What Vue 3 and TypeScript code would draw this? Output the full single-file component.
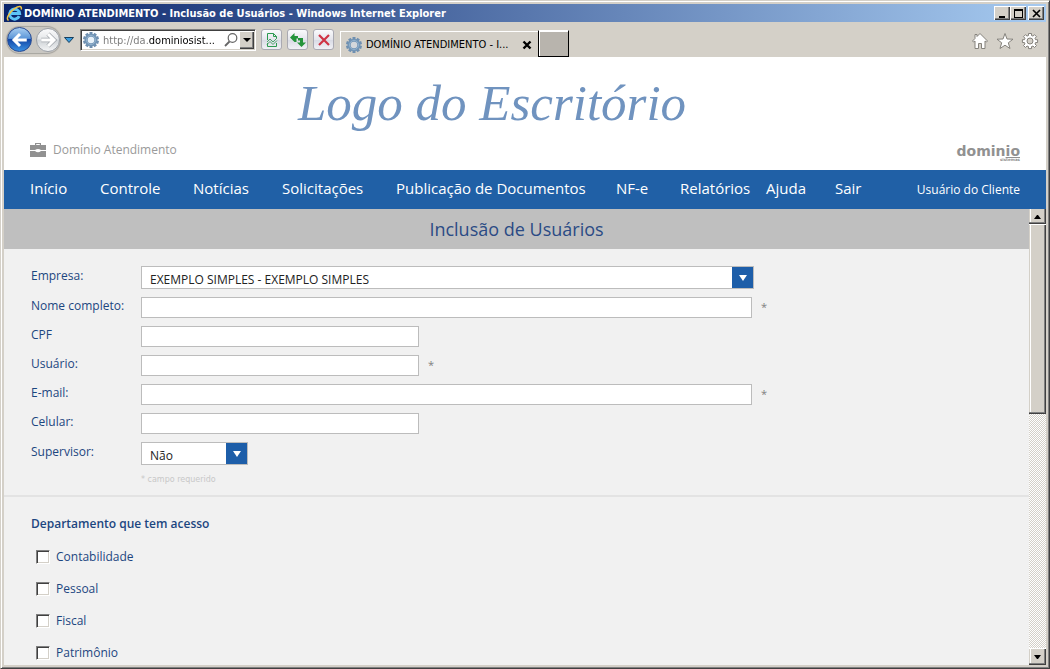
<script setup lang="ts">
import { ref } from 'vue'

interface Field {
  id: string
  label: string
  kind: 'select' | 'text'
  size: 'wide' | 'medium' | 'small'
  required?: boolean
  options?: string[]
}

const menu: string[] = [
  'Início',
  'Controle',
  'Notícias',
  'Solicitações',
  'Publicação de Documentos',
  'NF-e',
  'Relatórios',
  'Ajuda',
  'Sair',
]

const fields: Field[] = [
  { id: 'empresa', label: 'Empresa:', kind: 'select', size: 'wide', options: ['EXEMPLO SIMPLES - EXEMPLO SIMPLES'] },
  { id: 'nome', label: 'Nome completo:', kind: 'text', size: 'wide', required: true },
  { id: 'cpf', label: 'CPF', kind: 'text', size: 'medium' },
  { id: 'usuario', label: 'Usuário:', kind: 'text', size: 'medium', required: true },
  { id: 'email', label: 'E-mail:', kind: 'text', size: 'wide', required: true },
  { id: 'celular', label: 'Celular:', kind: 'text', size: 'medium' },
  { id: 'supervisor', label: 'Supervisor:', kind: 'select', size: 'small', options: ['Não', 'Sim'] },
]

const departments: string[] = ['Contabilidade', 'Pessoal', 'Fiscal', 'Patrimônio']
const selected = ref<string[]>([])
const address = ref('http://da.dominiosist...')
const gearTeeth: number[] = [0, 36, 72, 108, 144, 180, 216, 252, 288, 324]
</script>

<template>
  <div class="window">
    <header class="titlebar">
      <svg class="ie" viewBox="0 0 17 17" aria-hidden="true">
        <path d="M13.2 11.2A5 5 0 1 1 13.6 8.6H4.2" fill="none" stroke="#5cc4f6" stroke-width="3" />
        <path d="M2.600 15.300C-.600 14.600 3 7.400 8.200 3.900 12.500 1 16.400 .500 15.200 4.500" fill="none" stroke="#f0c544" stroke-width="1.500" />
      </svg>
      <span class="caption">DOMÍNIO ATENDIMENTO - Inclusão de Usuários - Windows Internet Explorer</span>
      <div class="controls">
        <button type="button" aria-label="Minimizar">
          <svg viewBox="0 0 13 11"><path d="M3 8h6v2H3z" /></svg>
        </button>
        <button type="button" aria-label="Maximizar">
          <svg viewBox="0 0 13 11"><path d="M2 1h9v9H2zM3 3v6h7V3z" fill-rule="evenodd" /></svg>
        </button>
        <button type="button" class="close" aria-label="Fechar">
          <svg viewBox="0 0 13 11"><path d="M3 2l7 7M10 2l-7 7" stroke="#000" stroke-width="1.700" /></svg>
        </button>
      </div>
    </header>

    <div class="toolbar">
      <div class="travel">
        <button type="button" class="round back" aria-label="Voltar">
          <svg viewBox="0 0 24 24"><path d="M12 4L4 12l8 8M5 12H21" fill="none" stroke="#fff" stroke-width="4" /></svg>
        </button>
        <button type="button" class="round forward" aria-label="Avançar">
          <svg viewBox="0 0 24 24"><path d="M12 4L20 12l-8 8M19 12H3" fill="none" stroke="#a3a7ad" stroke-width="6" /><path d="M12 4L20 12l-8 8M19 12H3" fill="none" stroke="#fff" stroke-width="4" /></svg>
        </button>
      </div>
      <button type="button" class="history" aria-label="Páginas recentes">
        <svg viewBox="0 0 10 6"><path d="M.5.500h9L5 5.500z" fill="#3a9de0" stroke="#17405f" /></svg>
      </button>
      <div class="address">
        <svg class="gear" viewBox="0 0 18 18" aria-hidden="true">
          <g fill="#6f8fb0"><rect v-for="a in gearTeeth" :key="a" x="7.500" y="1" width="3" height="4" :transform="`rotate(${a} 9 9)`" /></g>
          <circle cx="9" cy="9" r="4.800" fill="#e8f2fa" stroke="#7295b6" stroke-width="3" />
          <circle cx="9" cy="9" r="4.500" fill="none" stroke="#94b3cf" />
        </svg>
        <input v-model="address" type="text" aria-label="Endereço" />
        <button type="button" class="search" aria-label="Pesquisar">
          <svg viewBox="0 0 16 16"><circle cx="9.500" cy="6" r="4.300" fill="none" stroke="#666" stroke-width="1.200" /><path d="M6.500 9.500L2 14" stroke="#666" stroke-width="1.800" /></svg>
        </button>
        <button type="button" class="drop" aria-label="Mostrar endereços">
          <svg viewBox="0 0 8 4"><path d="M0 0h8L4 4z" /></svg>
        </button>
      </div>
      <div class="actions">
        <button type="button" aria-label="Modo de compatibilidade">
          <svg viewBox="0 0 16 16"><path d="M3.500 8V1.500h6l3 3V7M9.500 1.500v3h3M3.500 11v3.500h9V11" fill="none" stroke="#2c9a50" /><path d="M3 10l3-3 3 3 4-4M3 12.500l3-3 3 3 4-4" fill="none" stroke="#4ba66a" /></svg>
        </button>
        <button type="button" aria-label="Atualizar">
          <svg viewBox="0 0 16 16"><path d="M0 5.500L4.500 1v3H8v2.500H6.500V10h-2zM16 10.500L11.500 15 7 10.500h3V8.500H8V6h5v4.500z" fill="#24943b" /></svg>
        </button>
        <button type="button" aria-label="Parar">
          <svg viewBox="0 0 16 16"><path d="M3 3l10 10M13 3L3 13" stroke="#cf3344" stroke-width="2.200" /></svg>
        </button>
      </div>
      <div class="tab">
        <svg class="gear" viewBox="0 0 18 18" aria-hidden="true">
          <g fill="#6f8fb0"><rect v-for="a in gearTeeth" :key="a" x="7.500" y="1" width="3" height="4" :transform="`rotate(${a} 9 9)`" /></g>
          <circle cx="9" cy="9" r="4.800" fill="#d4d8dc" stroke="#7295b6" stroke-width="3" />
          <circle cx="9" cy="9" r="4.500" fill="none" stroke="#94b3cf" />
        </svg>
        <span class="tab-name">DOMÍNIO ATENDIMENTO - I...</span>
        <button type="button" aria-label="Fechar guia">
          <svg viewBox="0 0 10 10"><path d="M1.500 1.500l7 7M8.500 1.500l-7 7" stroke="#000" stroke-width="2.400" /></svg>
        </button>
      </div>
      <button type="button" class="new-tab" aria-label="Nova guia"></button>
      <div class="tools">
        <button type="button" aria-label="Página inicial">
          <svg viewBox="0 0 18 18"><path d="M9 1.500l7.500 7.500-1 1-1.500-1v7.500h-3.500v-5h-3v5H4V9l-1.500 1-1-1L4 6.500v-4h2v2z" /></svg>
        </button>
        <button type="button" aria-label="Favoritos">
          <svg viewBox="0 0 18 18"><path d="M9 1.500l2 5.500 6 .2-4.700 3.600 1.700 5.700L9 13.200l-5 3.300 1.700-5.700L1 7.200 7 7z" /></svg>
        </button>
        <button type="button" aria-label="Ferramentas">
          <svg viewBox="0 0 18 18"><path fill-rule="evenodd" d="M7.500 1.500h3v2l1.500.600L13.500 2.700l2 2L14 6.200l.6 1.500h2v2.800h-2L14 12l1.500 1.500-2 2L12 14l-1.500.6v2h-3v-2L6 14l-1.500 1.500-2-2L4 12l-.6-1.500h-2V7.700h2L4 6.200 2.500 4.700l2-2L6 4.100l1.500-.600zM9 6a3 3 0 1 0 0 6 3 3 0 0 0 0-6z" /></svg>
        </button>
      </div>
    </div>

    <div class="page">
      <div class="masthead">
        <div class="office-logo">Logo do Escritório</div>
        <div class="brands">
          <div class="product">
            <svg viewBox="0 0 16 14" aria-hidden="true"><path d="M0 2h5V0h6v2h5v5h-5q-3-2-6 0H0zM6.200 1v1h3.600V1zM0 8h5q3 2.500 6 0h5v6H0z" fill="#919191" fill-rule="evenodd" /></svg>
            <span>Domínio Atendimento</span>
          </div>
          <div class="vendor">domin<u>io</u><small>sistemas</small></div>
        </div>
      </div>

      <nav class="menu">
        <ul>
          <li v-for="item in menu" :key="item"><a href="#">{{ item }}</a></li>
        </ul>
        <a href="#" class="account">Usuário do Cliente</a>
      </nav>

      <div class="viewport">
        <main>
          <h1>Inclusão de Usuários</h1>
          <form @submit.prevent>
            <section class="fields">
              <div v-for="f in fields" :key="f.id" class="field">
                <label :for="f.id">{{ f.label }}</label>
                <div v-if="f.kind === 'select'" class="select" :class="f.size">
                  <select :id="f.id">
                    <option v-for="o in f.options" :key="o">{{ o }}</option>
                  </select>
                  <svg viewBox="0 0 8 6" aria-hidden="true"><path d="M0 0h8L4 6z" fill="#fff" /></svg>
                </div>
                <input v-else :id="f.id" type="text" :class="f.size" :required="f.required" />
                <span v-if="f.required" class="star">*</span>
              </div>
              <p class="hint">* campo requerido</p>
            </section>
            <fieldset>
              <legend>Departamento que tem acesso</legend>
              <label v-for="d in departments" :key="d" class="check">
                <input v-model="selected" type="checkbox" :value="d" />
                <span>{{ d }}</span>
              </label>
            </fieldset>
          </form>
        </main>
        <div class="scrollbar">
          <button type="button" class="up" aria-label="Rolar para cima">
            <svg viewBox="0 0 7 4"><path d="M3 0h1l3 4H0z" /></svg>
          </button>
          <div class="thumb"></div>
          <button type="button" class="down" aria-label="Rolar para baixo">
            <svg viewBox="0 0 7 4"><path d="M0 0h7L4 4H3z" /></svg>
          </button>
        </div>
      </div>
    </div>
  </div>
</template>

<style>
body {
  margin: 0;
  overflow: hidden;
}
</style>

<style scoped>
* {
  box-sizing: border-box;
}

button {
  display: flex;
  align-items: center;
  justify-content: center;
  padding: 0;
  border: 0;
  background: none;
}

svg {
  display: block;
  flex: none;
}

a {
  color: inherit;
  text-decoration: none;
}

.window {
  display: flex;
  flex-direction: column;
  height: 100vh;
  padding: 3px;
  border: 1px solid #d4d0c8;
  border-right-color: #404040;
  border-bottom-color: #404040;
  background: #d4d0c8;
  box-shadow: inset 1px 1px #fff, inset -1px -1px #808080;
  color: #000;
  font-family: "DejaVu Sans Condensed", "DejaVu Sans", sans-serif;
  font-size: 11px;
}

.titlebar {
  display: flex;
  align-items: center;
  flex: none;
  height: 18px;
  padding: 0 2px;
  background: linear-gradient(90deg, #0a246a, #a6caf0);
}

.ie {
  width: 17px;
  height: 17px;
}

.caption {
  flex: 1;
  padding-left: 1px;
  color: #fff;
  font-weight: bold;
  white-space: nowrap;
}

.controls {
  display: flex;
}

.controls button {
  width: 16px;
  height: 14px;
  background: #d4d0c8;
  box-shadow: inset 1px 1px #fff, inset -1px -1px #404040, inset -2px -2px #808080;
}

.controls svg {
  width: 13px;
  height: 11px;
}

.controls .close {
  margin-left: 2px;
}

.toolbar {
  display: flex;
  align-items: center;
  flex: none;
  height: 35px;
  padding: 0 7px 0 3px;
}

.travel {
  display: flex;
  align-items: center;
  gap: 4px;
  height: 26px;
  border-radius: 13px;
  background: #c9c7c2;
  box-shadow: 0 0 1px 1px #a5a39e;
}

.round {
  width: 24px;
  height: 24px;
  border: 1px solid #9a9fa6;
  border-radius: 50%;
}

.round svg {
  width: 18px;
  height: 18px;
}

.back {
  width: 25px;
  height: 25px;
  border-color: #274a93;
  background: linear-gradient(#a8cdf0, #5c96d8 45%, #1347a6 50%, #3a90e2);
}

.forward {
  background: linear-gradient(#fafafb, #e6e8ea 45%, #ced2d6 50%, #f4f5f6);
}

.history {
  margin: 0 6px 0 4px;
}

.history svg {
  width: 10px;
  height: 6px;
}

.address {
  display: flex;
  align-items: center;
  width: 176px;
  height: 22px;
  padding: 1px;
  border: 1px solid #808080;
  border-right-color: #fff;
  border-bottom-color: #fff;
  background: #fff;
  box-shadow: inset 1px 1px #404040, inset -1px -1px #d4d0c8;
}

.gear {
  width: 18px;
  height: 18px;
}

.address input {
  flex: 1;
  min-width: 0;
  padding: 2px 0 0 3px;
  border: 0;
  outline: 0;
  background: linear-gradient(90deg, #777 49px, #000 49px);
  -webkit-background-clip: text;
  background-clip: text;
  color: transparent;
  font: inherit;
}

.search svg {
  width: 16px;
  height: 16px;
}

.drop {
  width: 15px;
  height: 18px;
  background: #d4d0c8;
  box-shadow: inset 1px 1px #fff, inset -1px -1px #404040, inset -2px -2px #808080;
}

.drop svg {
  width: 8px;
  height: 4px;
}

.actions {
  display: flex;
  gap: 5px;
  margin: 0 6px 0 5px;
}

.actions button {
  width: 21px;
  height: 21px;
  border: 1px solid #a9a9b2;
  border-radius: 3px;
  background: linear-gradient(#fafafc, #e4e5ec 50%, #d8dae4 52%, #f0f1f5);
}

.actions svg {
  width: 16px;
  height: 16px;
}

.tab {
  display: flex;
  align-items: center;
  align-self: flex-end;
  width: 198px;
  height: 26px;
  padding: 0 6px 0 4px;
  border-top: 1px solid #fff;
  border-left: 1px solid #fff;
}

.tab-name {
  flex: 1;
  padding-left: 3px;
  white-space: nowrap;
}

.tab svg:not(.gear) {
  width: 10px;
  height: 10px;
}

.new-tab {
  align-self: flex-end;
  width: 31px;
  height: 27px;
  border: 1px solid #000;
  border-top-color: #fff;
  background: #b8b4ad;
  box-shadow: inset 1px 1px #fff;
}

.tools {
  display: flex;
  gap: 7px;
  margin-left: auto;
  padding-top: 2px;
}

.tools svg {
  width: 18px;
  height: 18px;
  fill: #fff;
  stroke: #85827c;
  stroke-width: 1;
}

.page {
  display: flex;
  flex: 1;
  flex-direction: column;
  min-height: 0;
  background: #fff;
  font-family: "Open Sans", "Noto Sans", sans-serif;
}

.masthead {
  flex: none;
  padding: 8px 26px 10px;
}

.office-logo {
  padding-right: 66px;
  color: #7093bf;
  font-family: "Liberation Serif", serif;
  font-size: 51px;
  font-style: italic;
  line-height: 76px;
  text-align: center;
  white-space: nowrap;
}

.brands {
  display: flex;
  align-items: center;
  justify-content: space-between;
  height: 19px;
}

.product {
  display: flex;
  align-items: center;
  gap: 7px;
  padding-bottom: 2px;
  color: #9a9a9a;
  font-size: 12px;
}

.product svg {
  width: 16px;
  height: 14px;
}

.vendor {
  position: relative;
  color: #919191;
  font-family: "DejaVu Sans", sans-serif;
  font-size: 14px;
  font-weight: bold;
}

.vendor small {
  position: absolute;
  right: 0;
  bottom: -3px;
  font-size: 4px;
}

.menu {
  display: flex;
  align-items: center;
  justify-content: space-between;
  flex: none;
  height: 39px;
  padding: 0 26px;
  background: #2060a6;
  color: #fff;
  font-size: 15px;
  white-space: nowrap;
}

.menu ul {
  display: grid;
  grid-template-columns: 70px 93px 89px 114px 220px 64px 86px 69px auto;
  margin: 0;
  padding: 0 0 3px;
  list-style: none;
}

.account {
  font-size: 12px;
}

.viewport {
  display: flex;
  flex: 1;
  min-height: 0;
}

main {
  flex: 1;
  min-width: 0;
  overflow: hidden;
  background: #f1f1f1;
  color: #1c4680;
  font-size: 12px;
}

h1 {
  margin: 0;
  background: #bfbfbf;
  color: #2b4b85;
  font-size: 18px;
  font-weight: normal;
  line-height: 40px;
  text-align: center;
}

.fields {
  display: flex;
  flex-direction: column;
  gap: 8px;
  padding: 17px 27px 9px;
  border-bottom: 2px solid #e3e3e3;
}

.field {
  display: flex;
  align-items: center;
}

.field label {
  flex: none;
  width: 110px;
  padding-bottom: 4px;
  line-height: 17px;
}

.field > input {
  height: 21px;
  padding: 0 8px;
  border: 1px solid #bcbcbc;
  background: #fff;
  font: inherit;
}

.field > .wide {
  width: 611px;
}

.field > .medium {
  width: 278px;
}

.field > .small {
  width: 107px;
}

.select {
  position: relative;
  height: 23px;
}

.field > .select.wide {
  width: 613px;
}

.select select {
  width: 100%;
  height: 100%;
  padding: 3px 24px 0 8px;
  border: 1px solid #bcbcbc;
  border-radius: 0;
  appearance: none;
  background: linear-gradient(#1d5ea9, #1d5ea9) right / 21px 100% no-repeat #fff;
  color: #222;
  font: inherit;
}

.select svg {
  position: absolute;
  top: 9px;
  right: 7px;
  width: 8px;
  height: 6px;
  pointer-events: none;
}

.star {
  padding: 0 0 2px 9px;
  color: #808080;
  font-size: 11px;
  line-height: 17px;
}

.hint {
  margin: 0 0 0 110px;
  color: #c8c8c8;
  font-family: "DejaVu Sans", sans-serif;
  font-size: 8px;
  line-height: 13px;
}

fieldset {
  margin: 0;
  padding: 0 27px;
  border: 0;
}

legend {
  padding: 18px 0 7px;
  font-size: 12px;
  font-weight: 600;
  line-height: 18px;
}

.check {
  display: flex;
  align-items: center;
  gap: 6px;
  width: fit-content;
  height: 32px;
  padding-left: 5px;
}

.check input {
  width: 14px;
  height: 14px;
  margin: 2px 0 0;
  border: 1px solid #808080;
  border-right-color: #fff;
  border-bottom-color: #fff;
  appearance: none;
  background: #fff;
  box-shadow: inset 1px 1px #404040, inset -1px -1px #d4d0c8;
}

.check input:checked {
  background: radial-gradient(#000 3px, #fff 3px);
}

.scrollbar {
  display: flex;
  flex-direction: column;
  flex: none;
  width: 17px;
  background: repeating-conic-gradient(#d4d0c8 0 25%, #fff 0 50%) 0 0 / 2px 2px;
}

.scrollbar svg {
  width: 7px;
  height: 4px;
}

.up,
.down,
.thumb {
  flex: none;
  background: #d4d0c8;
  box-shadow: inset -1px -1px #404040, inset -2px -2px #808080, inset 1px 0 #d4d0c8, inset 2px 0 #fff;
}

.up {
  height: 15px;
}

.thumb {
  height: 190px;
  border-top: 1px solid #fff;
}

.down {
  height: 17px;
  margin-top: auto;
  border-top: 1px solid #fff;
}
</style>
